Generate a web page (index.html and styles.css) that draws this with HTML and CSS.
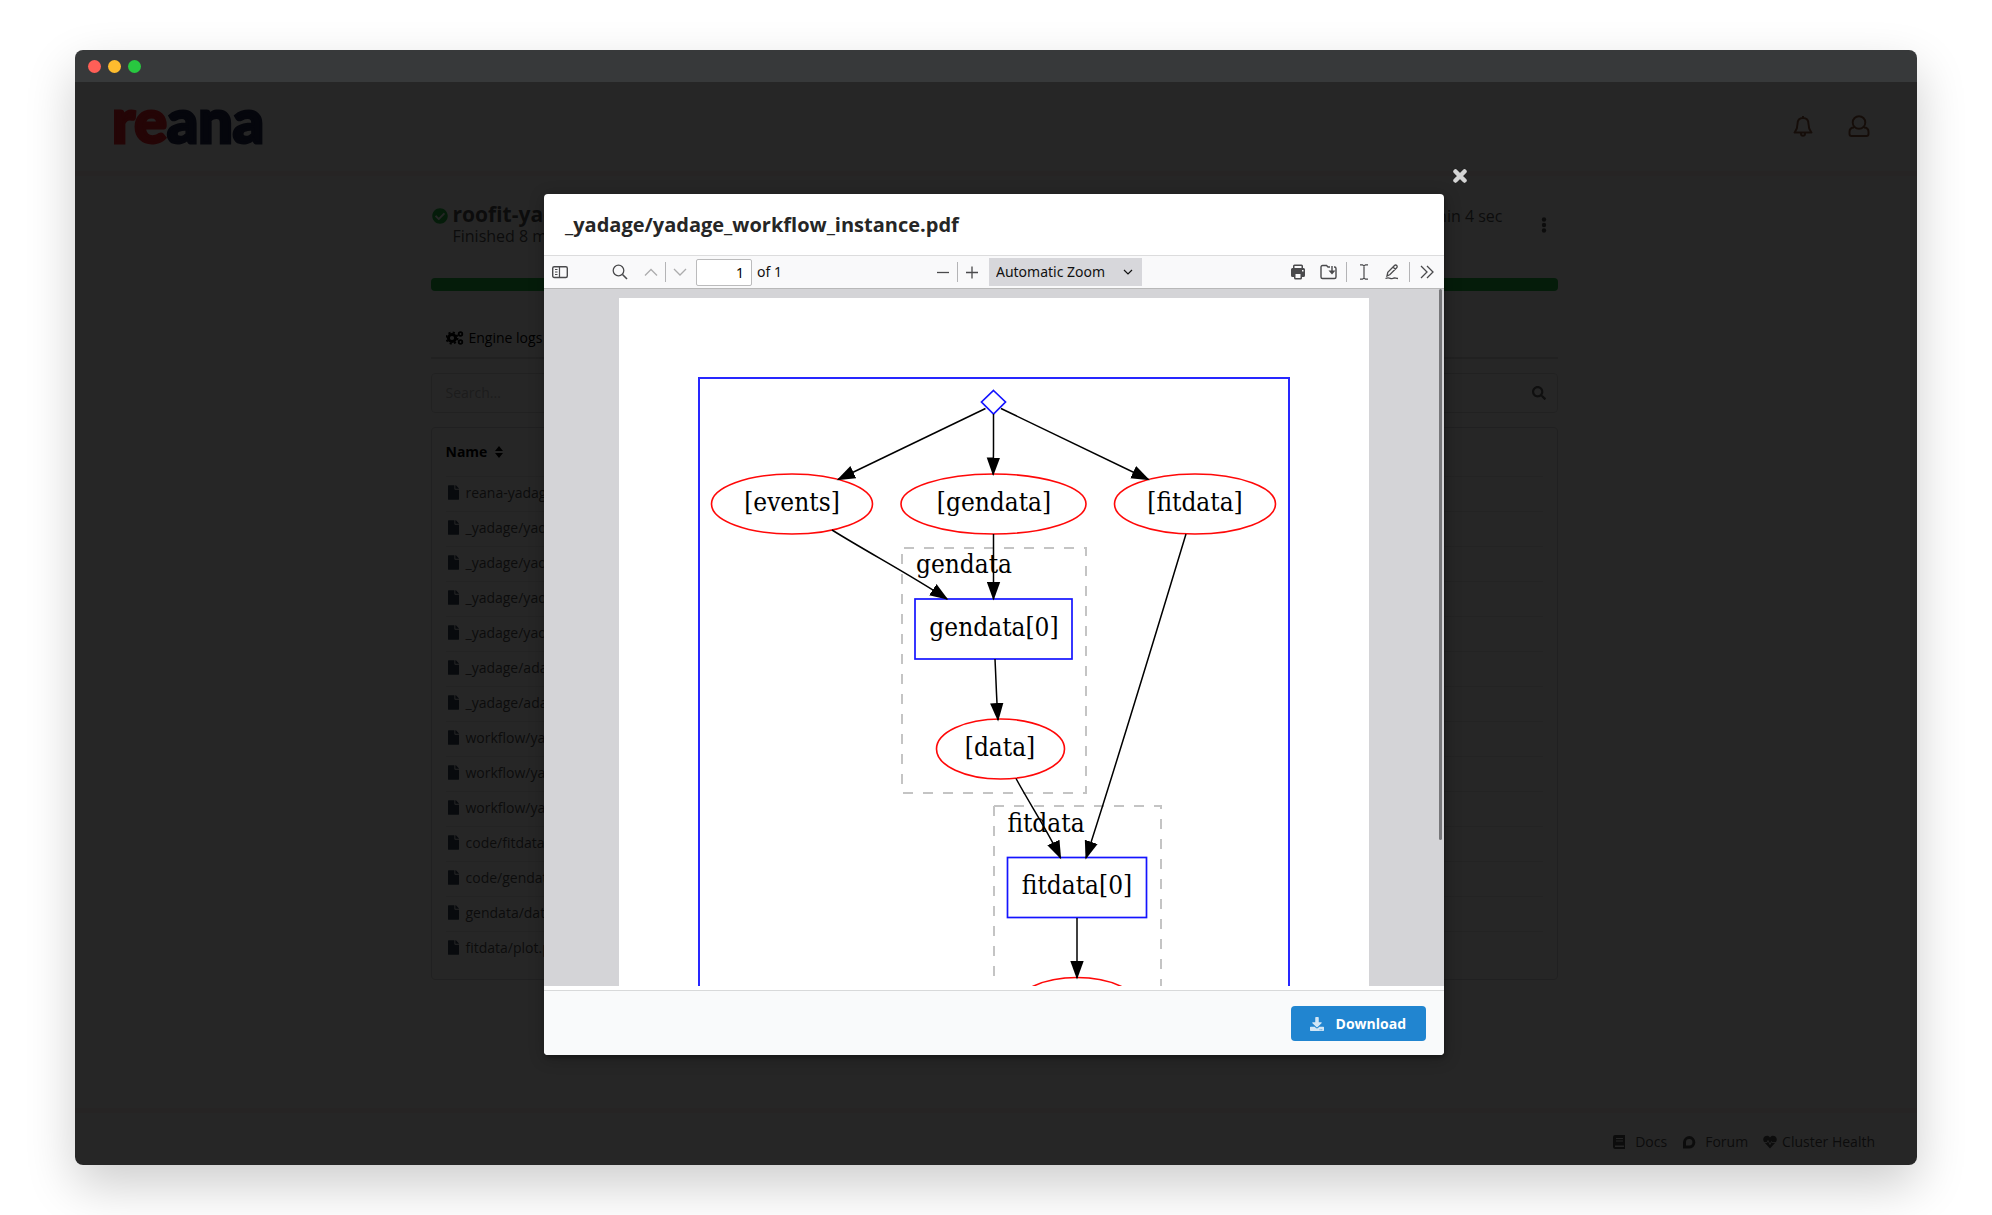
FILE: index.html
```html
<!DOCTYPE html>
<html lang="en">
<head>
<meta charset="utf-8">
<title>REANA - roofit-yadage</title>
<link rel="stylesheet" href="styles.css">
</head>
<body>
<svg class="defs" aria-hidden="true">
  <symbol id="file" viewBox="0 0 384 512"><path fill="currentColor" d="M224 136V0H24C10.700 0 0 10.700 0 24v464c0 13.300 10.700 24 24 24h336c13.300 0 24-10.700 24-24V160H248c-13.200 0-24-10.800-24-24zm160-14.100v6.100H256V0h6.100c6.400 0 12.500 2.500 17 7l97.900 98c4.500 4.500 7 10.600 7 16.900z"/></symbol>
</svg>
<div class="window">
  <div class="titlebar"><span class="dot red"></span><span class="dot amber"></span><span class="dot green"></span></div>
  <div class="screen">
    <div class="app">
      <header class="header">
        <a class="logo" href="#"><span class="logo-re">re</span>ana</a>
        <nav class="header-nav">
          <button class="plain" aria-label="Notifications"><svg width="20" height="22" viewBox="0 0 20 22" fill="none" stroke="currentColor" stroke-width="2" stroke-linejoin="round"><path d="M10 3C6 3 4.500 6 4.500 9c0 5-1.500 6.500-3 8.500h17c-1.500-2-3-3.500-3-8.500 0-3-1.500-6-5.500-6zM10 1v2M8 18.500c0 3 4 3 4 0"/></svg></button>
          <button class="plain" aria-label="Account"><svg width="22" height="22" viewBox="0 0 22 22" fill="none" stroke="currentColor" stroke-width="2"><circle cx="11" cy="7.500" r="6.300"/><path d="M6 12.500c-3 0-4.500 2-4.500 4.500v2c0 1.200.8 2 2 2h15c1.200 0 2-.8 2-2v-2c0-2.500-1.500-4.500-4.500-4.500"/></svg></button>
        </nav>
      </header>
      <main class="content">
        <section class="summary">
          <svg class="status" width="16" height="16" viewBox="0 0 512 512"><path fill="currentColor" d="M504 256c0 136.967-111.033 248-248 248S8 392.967 8 256 119.033 8 256 8s248 111.033 248 248zM227.314 387.314l184-184c6.248-6.248 6.248-16.379 0-22.627l-22.627-22.627c-6.248-6.249-16.379-6.249-22.628 0L216 308.118l-70.059-70.059c-6.248-6.248-16.379-6.248-22.628 0l-22.627 22.627c-6.248 6.248-6.248 16.379 0 22.627l104 104c6.249 6.249 16.379 6.249 22.628.001z"/></svg>
          <div class="run">
            <h1 class="run-name">roofit-yadage</h1>
            <p class="run-info">Finished 8 minutes ago</p>
          </div>
          <p class="duration">finished in 1 min 4 sec</p>
          <button class="plain more" aria-label="Actions"><svg width="6" height="18" viewBox="0 0 6 18" fill="currentColor"><circle cx="3" cy="3.500" r="2.200"/><circle cx="3" cy="9" r="2.200"/><circle cx="3" cy="14.500" r="2.200"/></svg></button>
        </section>
        <div class="progress"></div>
        <nav class="tabs"><a class="tab" href="#"><svg width="18" height="16" viewBox="0 0 18 16" fill="none" stroke="currentColor"><circle cx="6" cy="8" r="3.600" stroke-width="3"/><circle cx="6" cy="8" r="5.600" stroke-width="1.800" stroke-dasharray="2.200 2.200"/><circle cx="14.500" cy="4" r="1.800" stroke-width="1.800"/><circle cx="14.500" cy="12" r="1.800" stroke-width="1.800"/></svg>Engine logs</a></nav>
        <div class="search">
          <input class="search-input" type="text" placeholder="Search..." aria-label="Search files">
          <svg width="14" height="14" viewBox="0 0 512 512"><path fill="currentColor" d="M505 442.700L405.300 343c-4.500-4.500-10.600-7-17-7H372c27.600-35.300 44-79.700 44-128C416 93.100 322.900 0 208 0S0 93.100 0 208s93.100 208 208 208c48.300 0 92.700-16.400 128-44v16.300c0 6.400 2.500 12.500 7 17l99.700 99.700c9.400 9.400 24.600 9.400 33.900 0l28.300-28.300c9.400-9.400 9.400-24.600.1-34zM208 336c-70.700 0-128-57.200-128-128 0-70.700 57.200-128 128-128 70.700 0 128 57.200 128 128 0 70.700-57.200 128-128 128z"/></svg>
        </div>
        <div class="files">
          <table class="file-table">
            <thead><tr><th>Name<svg class="sort" width="8" height="12" viewBox="0 0 8 12" fill="currentColor"><path d="M4 0l4 5H0zM4 12l4-5H0z"/></svg></th></tr></thead>
            <tbody>
              <tr><td><svg class="file"><use href="#file"/></svg>reana-yadage.yaml</td></tr>
              <tr><td><svg class="file"><use href="#file"/></svg>_yadage/yadage_snapshot_backend.json</td></tr>
              <tr><td><svg class="file"><use href="#file"/></svg>_yadage/yadage_snapshot_workflow.json</td></tr>
              <tr><td><svg class="file"><use href="#file"/></svg>_yadage/yadage_template.json</td></tr>
              <tr><td><svg class="file"><use href="#file"/></svg>_yadage/yadage_workflow_instance.pdf</td></tr>
              <tr><td><svg class="file"><use href="#file"/></svg>_yadage/adage/dag.dot</td></tr>
              <tr><td><svg class="file"><use href="#file"/></svg>_yadage/adage/dag.log</td></tr>
              <tr><td><svg class="file"><use href="#file"/></svg>workflow/yadage/gendata.yml</td></tr>
              <tr><td><svg class="file"><use href="#file"/></svg>workflow/yadage/steps.yml</td></tr>
              <tr><td><svg class="file"><use href="#file"/></svg>workflow/yadage/workflow.yml</td></tr>
              <tr><td><svg class="file"><use href="#file"/></svg>code/fitdata.C</td></tr>
              <tr><td><svg class="file"><use href="#file"/></svg>code/gendata.C</td></tr>
              <tr><td><svg class="file"><use href="#file"/></svg>gendata/data.root</td></tr>
              <tr><td><svg class="file"><use href="#file"/></svg>fitdata/plot.png</td></tr>
            </tbody>
          </table>
        </div>
      </main>
      <footer class="footer">
        <a class="foot-link" href="#"><svg width="14" height="16" viewBox="0 0 14 16"><path fill="currentColor" fill-rule="evenodd" d="M3 1h10v14H3a2.200 2.200 0 0 1-2-2V3a2 2 0 0 1 2-2zM4 4v1h7V4zM4 6.500v1h7v-1zM3 11.500v1.500h9v-1.500z"/></svg><span class="foot-text">Docs</span></a>
        <a class="foot-link" href="#"><svg width="14" height="16" viewBox="0 0 14 16"><path d="M2.500 13V8A4.700 4.700 0 1 1 7 13z" fill="none" stroke="currentColor" stroke-width="3"/></svg><span class="foot-text">Forum</span></a>
        <a class="foot-link health" href="#"><svg width="14" height="16" viewBox="0 0 14 16"><path fill="currentColor" d="M7 14.500L1 8C-1 5 1 1.800 4 1.800c1.400 0 2.400.7 3 1.600.6-.9 1.600-1.600 3-1.600 3 0 5 3.200 3 6.200z"/><path d="M1 8.500h3l1-2 2 4 1.500-3 .6 1H13" fill="none" stroke="#fff" stroke-width=".8"/></svg><span class="foot-text">Cluster Health</span></a>
      </footer>
    </div>
    <div class="dimmer">
      <div class="modal" role="dialog" aria-labelledby="modal-title">
        <button class="close" aria-label="Close"><svg width="14" height="14" viewBox="0 0 14 14"><path d="M2.500 2.500l9 9M11.500 2.500l-9 9" stroke="currentColor" stroke-width="4.500" stroke-linecap="round"/></svg></button>
        <h2 class="modal-title" id="modal-title">_yadage/yadage_workflow_instance.pdf</h2>
        <div class="pdf">
          <div class="toolbar">
            <div class="tools">
              <button class="tool sidebar" aria-label="Toggle sidebar"><svg width="16" height="16" viewBox="0 0 16 16" fill="none" stroke="currentColor"><rect x=".7" y="2.700" width="14.600" height="10.800" rx="1.500" stroke-width="1.400"/><path d="M7.500 3v10M3 5.500h2.500M3 8h2.500M3 10.500h2.500" stroke-width="1.200"/></svg></button>
              <button class="tool find" aria-label="Find"><svg width="16" height="16" viewBox="0 0 16 16" fill="none" stroke="currentColor" stroke-width="1.300"><circle cx="6.500" cy="6.500" r="5.300"/><path d="M10.500 10.500l4.500 4.500" stroke-width="1.600"/></svg></button>
              <button class="tool off" aria-label="Previous page"><svg width="14" height="14" viewBox="0 0 14 14" fill="none" stroke="currentColor" stroke-width="1.300"><path d="M1 10.500l6-6 6 6"/></svg></button>
              <span class="sep"></span>
              <button class="tool off" aria-label="Next page"><svg width="14" height="14" viewBox="0 0 14 14" fill="none" stroke="currentColor" stroke-width="1.300"><path d="M1 4l6 6 6-6"/></svg></button>
              <input class="page-number" id="page" type="text" value="1"><label class="page-count" for="page">of 1</label>
            </div>
            <div class="tools">
              <button class="tool" aria-label="Zoom out"><svg width="14" height="14" viewBox="0 0 14 14" stroke="currentColor" stroke-width="1.300"><path d="M1 7.500h12"/></svg></button>
              <span class="sep"></span>
              <button class="tool" aria-label="Zoom in"><svg width="14" height="14" viewBox="0 0 14 14" stroke="currentColor" stroke-width="1.300"><path d="M1 7.500h12M7 1.500v12"/></svg></button>
              <div class="zoom"><select class="zoom-select" aria-label="Zoom"><option>Automatic Zoom</option></select><svg class="zoom-arrow" width="10" height="8" viewBox="0 0 10 8" fill="none" stroke="currentColor" stroke-width="1.200"><path d="M1 2l4 4 4-4"/></svg></div>
            </div>
            <div class="tools">
              <button class="tool" aria-label="Print"><svg width="16" height="16" viewBox="0 0 16 16" fill="currentColor"><path fill-rule="evenodd" d="M3 4V2a1.500 1.500 0 0 1 1.500-1.500h7A1.500 1.500 0 0 1 13 2v2h.5A1.500 1.500 0 0 1 15 5.500v6a1.500 1.500 0 0 1-1.500 1.500H12v1a1.500 1.500 0 0 1-1.500 1.500h-5A1.500 1.500 0 0 1 4 14v-1H2.500A1.500 1.500 0 0 1 1 11.500v-6A1.500 1.500 0 0 1 2.500 4zM4.500 2v2h7V2zM5.500 10v4h5v-4zM12 6v1.500h1.500V6z"/></svg></button>
              <button class="tool save" aria-label="Save"><svg width="18" height="16" viewBox="0 0 18 16" fill="none" stroke="currentColor" stroke-width="1.400"><path d="M10 3H8L6.500 1.500h-4A1.500 1.500 0 0 0 1 3v10a1.500 1.500 0 0 0 1.500 1.500h12A1.500 1.500 0 0 0 16 13V4.500A1.500 1.500 0 0 0 14.500 3H14M12 2v7"/><path d="M8.500 6.500h7L12 10.500z" fill="currentColor" stroke="none"/></svg></button>
              <span class="sep"></span>
              <button class="tool" aria-label="Text"><svg width="12" height="16" viewBox="0 0 12 16" fill="none" stroke="currentColor" stroke-width="1.200"><path d="M2 .8h2.500L6 2 7.500.8H10M2 15.200h2.500L6 14l1.500 1.200H10M6 2v12"/></svg></button>
              <button class="tool" aria-label="Draw"><svg width="16" height="16" viewBox="0 0 16 16" fill="none" stroke="currentColor" stroke-width="1.300"><path d="M3 12l.8-3.800L10.500 1.500c.7-.7 1.600-.6 2.200 0s.7 1.600 0 2.200L6 10.500zM9 3l2.500 2.500M1.500 14.500c4-2 5 1 7 0s2-.5 5.500 0"/></svg></button>
              <span class="sep"></span>
              <button class="tool" aria-label="More tools"><svg width="14" height="14" viewBox="0 0 14 14" fill="none" stroke="currentColor" stroke-width="1.300"><path d="M1 1l6 6-6 6M7 1l6 6-6 6"/></svg></button>
            </div>
          </div>
          <div class="viewport">
            <svg class="page" viewBox="0 0 750 688" role="img" aria-label="Workflow graph">
              <defs><marker id="arrow" markerUnits="userSpaceOnUse" markerWidth="20" markerHeight="14" refX="17" refY="7" orient="auto"><path d="M0 .3l18.500 6.700-18.500 6.700z"/></marker></defs>
              <path class="job frame" d="M80 700V80h590v620"/>
              <path class="cluster" stroke-dashoffset="14" d="M283 250v245h184V250z"/>
              <path class="cluster" d="M375 508h167v200M375 508v200"/>
              <path class="job" d="M374.500 92.500l12 11.500-12 12-12-12z"/>
              <rect class="job" x="296" y="301" width="157" height="60"/>
              <rect class="job" x="388.500" y="559.500" width="139" height="60"/>
              <g class="data">
                <ellipse cx="173" cy="206" rx="80.500" ry="30"/>
                <ellipse cx="374.500" cy="206" rx="92.500" ry="30"/>
                <ellipse cx="576" cy="206" rx="80.500" ry="30"/>
                <ellipse cx="381.500" cy="451" rx="64" ry="30"/>
                <ellipse cx="458" cy="709.500" rx="62" ry="30"/>
              </g>
              <g class="label">
                <text x="173" y="213">[events]</text>
                <text x="375" y="213">[gendata]</text>
                <text x="576" y="213">[fitdata]</text>
                <text x="345" y="275">gendata</text>
                <text x="375" y="338">gendata[0]</text>
                <text x="381" y="458">[data]</text>
                <text x="427" y="534">fitdata</text>
                <text x="458" y="596">fitdata[0]</text>
              </g>
              <g class="edge">
                <path d="M366.500 110.500L219 181.500"/>
                <path d="M374.500 116v35l-.3 25.500"/>
                <path d="M382 110.500L529.500 181.500"/>
                <path d="M213 232C250 255 290 276 328 301"/>
                <path d="M374.500 236v65"/>
                <path d="M376 361c1 20 1.500 40 3 61"/>
                <path d="M397 480.500C412 508 430 535 441.500 560"/>
                <path d="M567 236C536 338 500 458 467 560"/>
                <path d="M458 620v60"/>
              </g>
            </svg>
            <div class="thumb"></div>
          </div>
        </div>
        <div class="actions">
          <button class="download"><svg width="14" height="14" viewBox="0 0 512 512"><path fill="currentColor" d="M216 0h80c13.300 0 24 10.700 24 24v168h87.700c17.800 0 26.700 21.500 14.100 34.100L269.700 378.300c-7.500 7.500-19.800 7.500-27.300 0L90.100 226.100c-12.600-12.600-3.700-34.100 14.100-34.100H192V24c0-13.300 10.700-24 24-24zm296 376v112c0 13.300-10.700 24-24 24H24c-13.300 0-24-10.700-24-24V376c0-13.300 10.700-24 24-24h146.700l49 49c20.100 20.100 52.500 20.100 72.600 0l49-49H488c13.300 0 24 10.700 24 24zm-124 88c0-11-9-20-20-20s-20 9-20 20 9 20 20 20 20-9 20-20zm64 0c0-11-9-20-20-20s-20 9-20 20 9 20 20 20 20-9 20-20z"/></svg>Download</button>
        </div>
      </div>
    </div>
  </div>
</div>
</body>
</html>
```
FILE: styles.css
```css
* { box-sizing: border-box; }
body {
  margin: 0;
  min-height: 100vh;
  padding: 50px 75px;
  display: flex;
  background: #fff;
  color: #212121;
  font: 14px/20px "Open Sans", "Noto Sans", sans-serif;
}
h1, h2, p { margin: 0; }
button { font: inherit; cursor: pointer; }
svg { display: block; flex: none; }
.defs { position: absolute; width: 0; height: 0; }

/* browser window */
.window {
  flex: 1;
  min-width: 0;
  display: flex;
  flex-direction: column;
  border-radius: 8px;
  overflow: hidden;
  box-shadow: 0 20px 50px rgba(0, 0, 0, .2);
}
.titlebar { height: 32px; padding: 0 14px 0 13px; display: flex; align-items: center; gap: 7px; background: #37393a; }
.dot { width: 13px; height: 13px; margin-top: 1px; border-radius: 50%; }
.red { background: #ff5f57; }
.amber { background: #febc2e; }
.green { background: #28c840; }
.screen { flex: 1; position: relative; display: flex; flex-direction: column; background: #fff; }

/* dimmed application */
.app { flex: 1; display: flex; flex-direction: column; }
.header { height: 94px; padding: 0 47px 4px 37px; display: flex; justify-content: space-between; align-items: center; border-bottom: 5px solid #fff2f2; }
.logo { padding-bottom: 9px; color: #212850; font: 900 61px/80px Lato, sans-serif; text-decoration: none; -webkit-text-stroke: 3px currentColor; }
.logo-re { color: #f22128; }
.header-nav { display: flex; gap: 35px; padding-top: 3px; }
.plain { padding: 0; border: 0; background: none; color: inherit; }
.header-nav .plain { color: #905a40; }
.content { width: 100%; max-width: 1131px; margin: 0 auto; padding: 26px 4px 0 0; }
.summary { display: flex; align-items: flex-start; height: 76px; }
.status { color: #21ba45; margin: 6px 5px 0 1px; }
.run-name { font-size: 21px; line-height: 25px; color: #555; }
.run-info { font-size: 16px; line-height: 18px; color: #555; }
.duration { margin-left: auto; padding-top: 4px; font-size: 16px; color: #555; }
.more { margin: 14px 11px 0 38px; color: #555; }
.progress { height: 13px; border-radius: 4px; background: #21ba45; }
.tabs { height: 68px; padding: 37px 15px 0; border-bottom: 2px solid #dcdcdc; }
.tab { display: inline-flex; align-items: center; gap: 5px; color: #000; text-decoration: none; }
.search { height: 40px; margin-top: 14px; padding: 0 11px 0 14px; display: flex; align-items: center; border: 1px solid #dededf; border-radius: 4px; color: #666; }
.search-input { flex: 1; min-width: 0; padding: 0; border: 0; outline: 0; font: inherit; }
.search-input::placeholder { color: #bbb; opacity: 1; }
.files { margin-top: 14px; padding: 0 14px 13px; border: 1px solid #d8d8d9; border-radius: 4px; }
.file-table { width: 100%; border-collapse: collapse; }
.file-table th { height: 48px; padding: 0; text-align: left; color: #000; }
.file-table td { height: 35px; padding: 0 0 2px; border-top: 1px solid #e6e6e7; color: #555; }
.sort { display: inline-block; margin-left: 8px; vertical-align: -1px; }
.file { display: inline-block; width: 11px; height: 15px; margin: 0 7px 0 2px; vertical-align: -2px; color: #38465a; }
.footer { height: 57px; margin-top: auto; padding: 6px 42px 0; display: flex; justify-content: flex-end; align-items: center; gap: 15px; border-top: 5px solid #fff2f2; }
.foot-link { display: flex; align-items: center; gap: 9px; color: #555; text-decoration: none; }
.health { gap: 5px; }

/* dimmer and dialog */
.dimmer { position: absolute; inset: 0; padding: 2px 4px 0 0; display: flex; align-items: center; justify-content: center; background: rgba(0, 0, 0, .85); }
.modal { position: relative; width: 900px; max-width: 90%; border-radius: 4px; background: #fff; box-shadow: 1px 3px 3px rgba(0, 0, 0, .2), 1px 3px 15px 2px rgba(0, 0, 0, .2); }
.close { position: absolute; top: -25px; right: -23px; padding: 0; border: 0; background: none; color: #d4d4d4; }
.modal-title { height: 62px; padding: 17px 21px; border-bottom: 1px solid #dcdcdd; font-size: 20px; line-height: 28px; color: #262626; }
.pdf { height: 734px; padding-bottom: 4px; display: flex; flex-direction: column; }
.toolbar { height: 33px; padding: 0 3px 0 2px; display: flex; justify-content: space-between; align-items: center; background: #f9f9fa; border-bottom: 1px solid #b8b8b8; font: 14px/20px "Noto Sans", sans-serif; color: #111; }
.tools { display: flex; align-items: center; }
.tool { width: 28px; height: 28px; padding: 0; border: 0; display: flex; align-items: center; justify-content: center; background: none; color: #4a4a4c; }
.sidebar { margin-right: 32px; }
.find { margin-right: 3px; }
.save { margin-left: 3px; }
.off { color: #acacad; }
.sep { width: 1px; height: 20px; background: #b4b4b6; }
.page-number { width: 56px; height: 27px; margin-left: 2px; padding: 0 7px; border: 1px solid #bbbbbc; border-radius: 2px; text-align: right; font: inherit; color: #000; background: #fff; }
.page-count { padding: 0 5px; }
.zoom { position: relative; margin-left: 3px; }
.zoom-select { width: 153px; height: 28px; padding: 0 7px; border: 0; appearance: none; background: #d7d7db; color: #111; font: inherit; }
.zoom-arrow { position: absolute; right: 9px; top: 10px; pointer-events: none; }
.tools:last-child .sep { margin: 0 3px; }
.viewport { position: relative; flex: 1; min-height: 0; padding: 9px 75px 0; overflow: hidden; background: #d4d4d7; }
.page { width: 100%; background: #fff; }
.thumb { position: absolute; top: 0; right: 2px; width: 3px; height: 551px; border-radius: 2px; background: #77777a; }
.job { fill: none; stroke: #1414ff; stroke-width: 1.7; }
.frame { stroke: #2828ff; stroke-width: 2; }
.cluster { fill: none; stroke: #c4c4c4; stroke-width: 2; stroke-dasharray: 10; }
.data { fill: none; stroke: #ff0808; stroke-width: 1.600; }
.label { font: 26px "DejaVu Serif Condensed", "DejaVu Serif", serif; fill: #000; text-anchor: middle; }
.edge { fill: none; stroke: #000; stroke-width: 1.500; }
.edge path { marker-end: url(#arrow); }
.actions { padding: 15px 18px 14px; display: flex; justify-content: flex-end; border-top: 1px solid #d8d9da; border-radius: 0 0 4px 4px; background: #f9fafb; }
.download { width: 135px; height: 35px; padding: 0 20px 0 19px; display: flex; align-items: center; justify-content: space-between; border: 0; border-radius: 4px; background: #2185d0; color: #fff; font-weight: 700; }
.download svg { opacity: .8; }
```
